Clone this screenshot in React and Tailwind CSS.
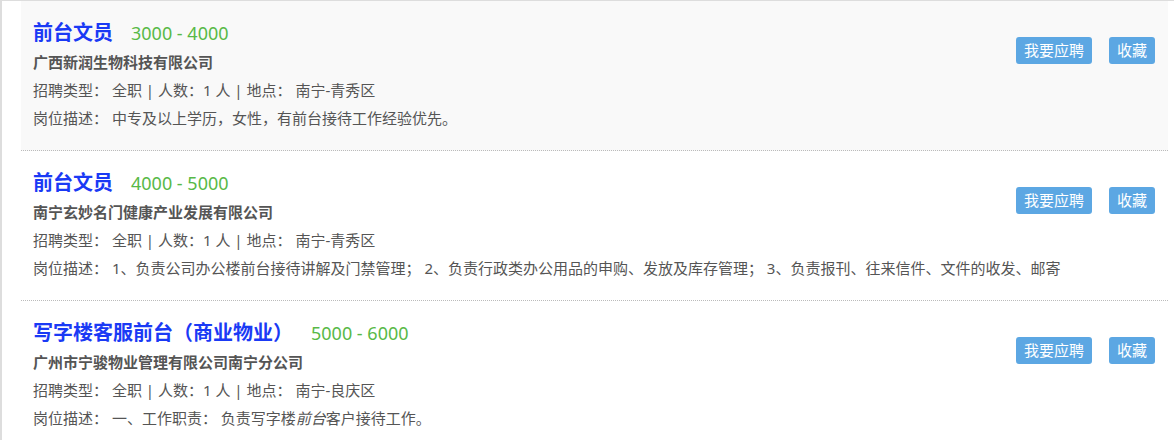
const jobs = [
  {
    title: "前台文员",
    salary: "3000 - 4000",
    company: "广西新润生物科技有限公司",
    area: "南宁-青秀区",
    desc: <>中专及以上学历，女性，有前台接待工作经验优先。</>,
    active: true,
  },
  {
    title: "前台文员",
    salary: "4000 - 5000",
    company: "南宁玄妙名门健康产业发展有限公司",
    area: "南宁-青秀区",
    desc: (
      <>
        1、负责公司办公楼前台接待讲解及门禁管理； 2、负责行政类办公用品的申购、发放及库存管理； 3、负责报刊、往来信件、文件的收发、邮寄
      </>
    ),
  },
  {
    title: "写字楼客服前台（商业物业）",
    salary: "5000 - 6000",
    company: "广州市宁骏物业管理有限公司南宁分公司",
    area: "南宁-良庆区",
    desc: (
      <>
        一、工作职责： 负责写字楼<em>前台</em>客户接待工作。
      </>
    ),
  },
];

function JobItem({ job }) {
  return (
    <li
      className={
        "flex justify-between pl-3 pr-[13px] pt-[17px] pb-[18px] border-b border-dotted border-[#bbb] " +
        (job.active ? "bg-[#f9f9f9]" : "bg-white")
      }
    >
      <div className="flex flex-col min-w-0 flex-1">
        <div className="flex items-center h-[30px]">
          <span className="text-[20px] font-bold text-[#1a3af5]">{job.title}</span>
          <span className="ml-[18px] text-[18px] text-[#58b947]">{job.salary}</span>
        </div>
        <div className="h-[28px] leading-[28px] text-[15px] font-bold text-[#555]">{job.company}</div>
        <div className="h-[28px] leading-[28px] text-[15px] text-[#555]">
          招聘类型： 全职 | 人数：1 人 | 地点： {job.area}
        </div>
        <div className="h-[28px] leading-[28px] text-[15px] text-[#555] whitespace-nowrap">
          岗位描述： {job.desc}
        </div>
      </div>
      <div className="flex shrink-0 items-start gap-[17px] mt-[19px]">
        <button className="h-[27px] px-2 rounded-[3px] bg-[#5ca7e3] text-white text-[15px] leading-[27px] whitespace-nowrap">
          我要应聘
        </button>
        <button className="h-[27px] px-2 rounded-[3px] bg-[#5ca7e3] text-white text-[15px] leading-[27px] whitespace-nowrap">
          收藏
        </button>
      </div>
    </li>
  );
}

export default function App() {
  return (
    <div className="w-[1174px] h-[440px] overflow-hidden bg-white border-l-2 border-t border-[#ddd] font-['Noto_Sans','Noto_Sans_CJK_SC',sans-serif]">
      <ul className="ml-[19px] w-[1147px]">
        {jobs.map((job, i) => (
          <JobItem key={i} job={job} />
        ))}
      </ul>
    </div>
  );
}
